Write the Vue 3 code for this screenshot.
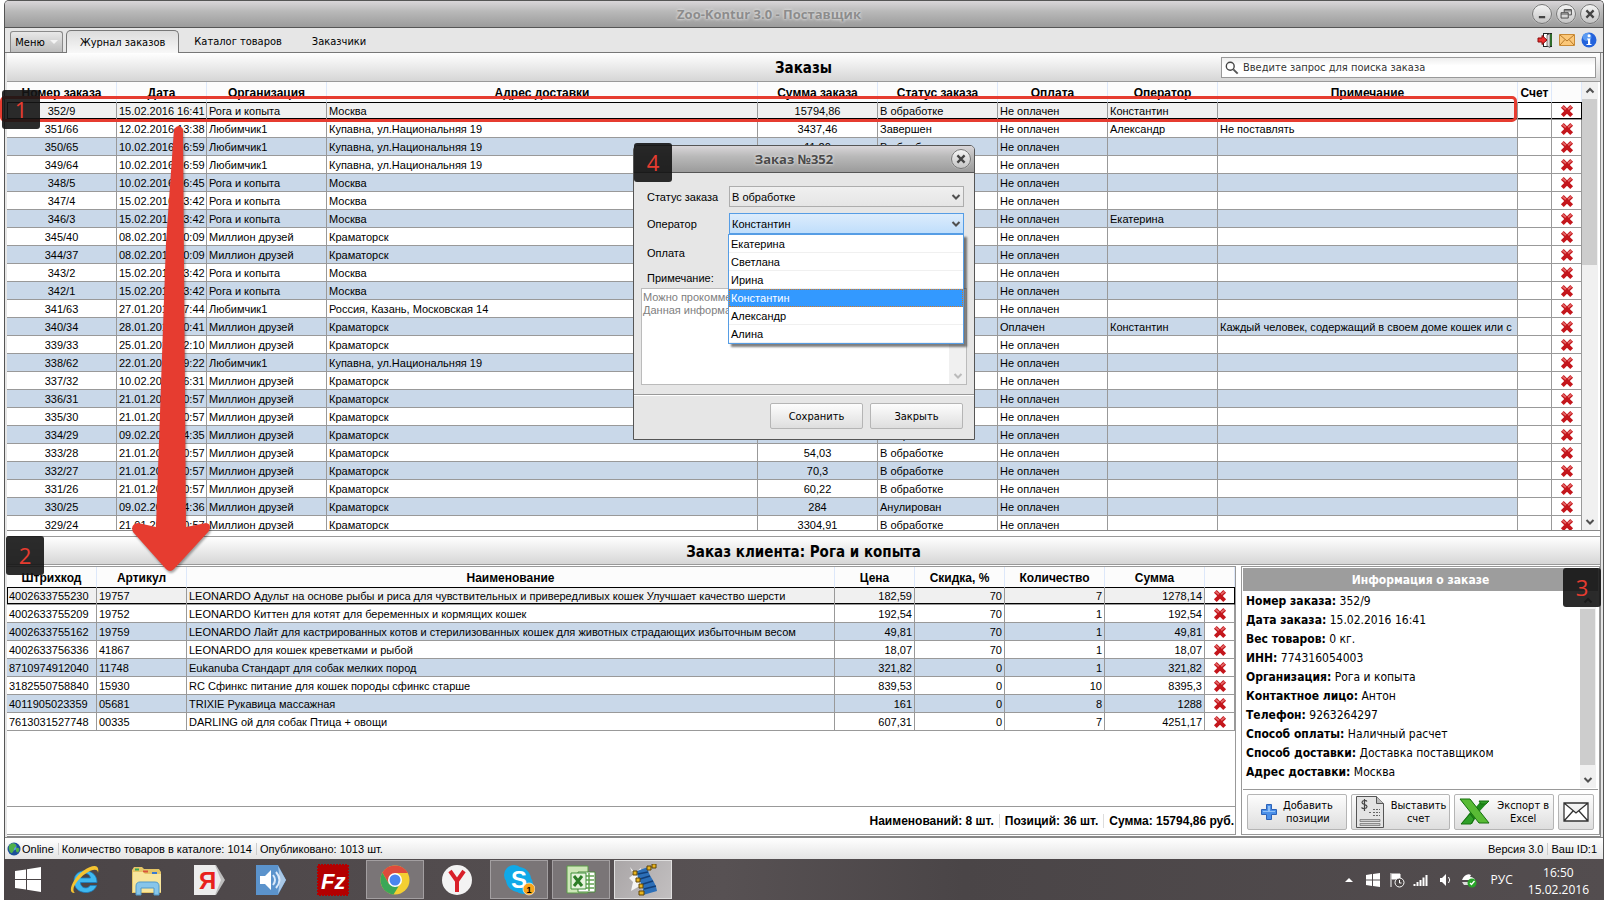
<template>
  <div class="pantalla">
    <div class="ventana">
      <header class="barra_titulo">
        <h1>Zoo-Kontur 3.0 - Поставщик</h1>
        <div class="botones_ventana">
          <button class="redondo" aria-label="Свернуть">
            <svg viewBox="0 0 20 20"><path d="M6.500 13.500h7" /></svg>
          </button>
          <button class="redondo" aria-label="Развернуть">
            <svg viewBox="0 0 20 20"><path class="fino" d="M8 8V5h8v6h-3M4.500 8.500h8v6h-8zM4.500 10h8M8 6.500h8" /></svg>
          </button>
          <button class="redondo" aria-label="Закрыть">
            <svg viewBox="0 0 20 20"><path d="M6 6l8 8M14 6l-8 8" /></svg>
          </button>
        </div>
      </header>

      <nav class="menu">
        <button class="boton_menu">Меню <span class="flecha"></span></button>
        <button
          v-for="(t, i) in tabs"
          :key="t"
          class="tab"
          :class="{ activo: i === tab }"
          @click="tab = i"
        >
          {{ t }}
        </button>
        <div class="iconos_menu">
          <svg viewBox="0 0 16 16">
            <path d="M6 1h9v14H6z" fill="#222" />
            <path d="M7 2h3v12H7z" fill="#fff" />
            <path d="M10 3l3-1.500v14L10 14z" fill="#d9d9d9" stroke="#333" stroke-width=".6" />
            <path d="M13 2h2v12h-2z" fill="#2f6b2b" />
            <path d="M1 6h4V3.500l5 4.500-5 4.500V10H1z" fill="#ee3030" stroke="#8a0d0d" />
          </svg>
          <svg viewBox="0 0 16 16">
            <path d="M.5 2.500h15v11H.5z" fill="#fbc778" stroke="#c98a35" />
            <path d="M1 3l7 6 7-6M1 13l5-5.500M15 13l-5-5.500" fill="none" stroke="#b87a2b" />
          </svg>
          <svg viewBox="0 0 16 16">
            <circle cx="8" cy="8" r="7.500" fill="#2463dc" />
            <ellipse cx="6" cy="5" rx="4.500" ry="4" fill="#5b9bf2" />
            <circle cx="8" cy="3.800" r="1.500" fill="#fff" />
            <path d="M6 6.500h3.200V12H10.500v1h-5v-1H7V7.500H6z" fill="#fff" />
          </svg>
        </div>
      </nav>

      <main class="contenido">
        <div class="franja">
          <h2>Заказы</h2>
          <label class="buscador">
            <svg viewBox="0 0 16 16">
              <circle cx="6" cy="6" r="4.500" fill="none" stroke="#444" stroke-width="1.600" />
              <path d="M9.500 9.500l5 5" stroke="#555" stroke-width="2.200" />
            </svg>
            <input v-model="busqueda" type="text" placeholder="Введите запрос для поиска заказа" />
          </label>
        </div>

        <div class="pedidos">
          <table class="tabla">
            <colgroup>
              <col v-for="(c, i) in columnas" :key="i" :style="c.w ? { width: c.w + 'px' } : {}" />
            </colgroup>
            <thead>
              <tr>
                <th v-for="(c, i) in columnas" :key="i">{{ c.t }}</th>
              </tr>
            </thead>
            <tbody>
              <tr v-for="(p, i) in pedidos" :key="i" :class="{ elegido: i === elegido }" @click="elegido = i">
                <td class="centro">{{ p[0] }}</td>
                <td>{{ p[1] }}</td>
                <td>{{ p[2] }}</td>
                <td>{{ p[3] }}</td>
                <td class="centro">{{ p[4] }}</td>
                <td>{{ p[5] }}</td>
                <td>{{ p[6] || 'Не оплачен' }}</td>
                <td>{{ p[7] }}</td>
                <td>{{ p[8] }}</td>
                <td class="blanco"></td>
                <td class="blanco borrar">
                  <button aria-label="Удалить">
                    <svg viewBox="0 0 12 12"><path d="M2 2l8 8M10 2l-8 8" /><path class="brillo" d="M2 2l3 2.500M10 2L7 4.500" /></svg>
                  </button>
                </td>
              </tr>
            </tbody>
          </table>
          <div class="scroll">
            <svg viewBox="0 0 16 16"><path d="M4.500 10L8 6.500l3.500 3.500" /></svg>
            <div class="carril"><div class="pulgar corto"></div></div>
            <svg viewBox="0 0 16 16"><path d="M4.500 6.500L8 10l3.500-3.500" /></svg>
          </div>
        </div>

        <div class="franja segunda">
          <h2>Заказ клиента: Рога и копыта</h2>
        </div>

        <div class="detalle">
          <section class="articulos">
            <table class="tabla">
              <colgroup>
                <col v-for="(c, i) in columnas2" :key="i" :style="c.w ? { width: c.w + 'px' } : {}" />
              </colgroup>
              <thead>
                <tr>
                  <th v-for="(c, i) in columnas2" :key="i">{{ c.t }}</th>
                </tr>
              </thead>
              <tbody>
                <tr v-for="(a, i) in articulos" :key="i" :class="{ elegido: i === 0 }">
                  <td v-for="(v, j) in a" :key="j" :class="{ derecha: j > 2 }">{{ v }}</td>
                  <td class="blanco borrar">
                    <button aria-label="Удалить">
                      <svg viewBox="0 0 12 12"><path d="M2 2l8 8M10 2l-8 8" /><path class="brillo" d="M2 2l3 2.500M10 2L7 4.500" /></svg>
                    </button>
                  </td>
                </tr>
              </tbody>
            </table>
            <div class="totales">
              <span>Наименований: 8 шт.</span>
              <span>Позиций: 36 шт.</span>
              <span>Сумма: 15794,86 руб.</span>
            </div>
          </section>

          <aside class="info">
            <h3>Информация о заказе</h3>
            <div class="cuerpo_info">
              <div class="lineas">
                <p v-for="l in info" :key="l[0]"><b>{{ l[0] }}:</b> {{ l[1] }}</p>
              </div>
              <div class="scroll">
                <svg viewBox="0 0 16 16"><path d="M4.500 10L8 6.500l3.500 3.500" /></svg>
                <div class="carril"><div class="pulgar largo"></div></div>
                <svg viewBox="0 0 16 16"><path d="M4.500 6.500L8 10l3.500-3.500" /></svg>
              </div>
            </div>
            <div class="acciones">
              <button>
                <svg class="mas" viewBox="0 0 16 16"><path d="M5.500.5h5v5h5v5h-5v5h-5v-5h-5v-5h5z" fill="#4a8fe8" stroke="#2c62b8" /><path d="M7 2h2v5h5v1H2V7h5z" fill="#8fc0f8" /></svg>
                <span>Добавить<br />позиции</span>
              </button>
              <button>
                <svg class="cuenta" viewBox="0 0 30 34">
                  <path d="M1.500 1.500h20l7 7v24h-27z" fill="#e4e4e4" stroke="#555" />
                  <path d="M21.500 1.500v7h7" fill="#bbb" stroke="#555" />
                  <path d="M12 6.500c-1-1.500-5-1.500-5 1s5 1.500 5 4-4 2.500-5.500 1M9.500 4v12" fill="none" stroke="#444" stroke-width="1.200" />
                  <path d="M14 17.500h3M18 14.500h7M18 17.500h7M18 20.500h7" stroke="#666" stroke-dasharray="2 1" />
                  <path d="M5 24.500h20v2H5zM5 28.500h20v2H5z" fill="#ccc" stroke="#777" stroke-width=".8" />
                </svg>
                <span>Выставить<br />счет</span>
              </button>
              <button>
                <svg class="excel" viewBox="0 0 32 28">
                  <path d="M1 1h10l6 8 5-6h8L20 14l-7 12H2l10-13z" fill="#1f8a1c" />
                  <path d="M1 1h10l19 24H20z" fill="#59bb35" stroke="#16700f" />
                  <path d="M20 3h10l-3 3-5 0zM2 26l9-10 4 5-3 5z" fill="#2f9f28" stroke="#16700f" />
                </svg>
                <span>Экспорт в<br />Excel</span>
              </button>
              <button class="carta" aria-label="Письмо">
                <svg viewBox="0 0 26 20"><path d="M1 1h24v18H1zM1 1l12 10L25 1M1 19l9-10M25 19l-9-10" fill="#fff" stroke="#333" stroke-width="1.300" /></svg>
              </button>
            </div>
          </aside>
        </div>
      </main>

      <footer class="estado">
        <svg class="globo" viewBox="0 0 14 14">
          <circle cx="7" cy="7" r="6.500" fill="#1d4f9a" />
          <circle cx="6" cy="5" r="3.500" fill="#5c9be0" />
          <path d="M2 4c2-4 6-3 7-1s-2 2-2 4-2 5-3 4-3-4-2-7zM9 6c3-1 4 1 3 3s-2 2-3 0z" fill="#4fb04a" />
        </svg>
        <span>Online</span>
        <span>Количество товаров в каталоге: 1014</span>
        <span>Опубликовано: 1013 шт.</span>
        <span class="version">Версия 3.0</span>
        <span>Ваш ID:1</span>
      </footer>
    </div>

    <div class="tareas">
      <button class="inicio" aria-label="Пуск">
        <svg viewBox="0 0 26 26"><path d="M0 4l11-1.500V12H0zM12 2.300L26 0v12H12zM0 13h11v9.500L0 21zM12 13h14v12l-14-2.300z" fill="#fff" /></svg>
      </button>
      <button class="tarea" aria-label="Internet Explorer">
        <svg viewBox="0 0 32 32">
          <path d="M28 18.500H11.500c0 6 7.500 7 9.500 3h6.500C24.500 32 5 31 5 17S28 3 28 18.500zm-6.500-4.500c-1-6-9-6-10 0z" fill="#3fb9f0" stroke="#1b7fc2" stroke-width=".8" />
          <path d="M6 29C-3 30 4 14 14 7S31 0 29 9c0-5-6-4-13 1S1 25 6 29z" fill="#f5c431" />
        </svg>
      </button>
      <button class="tarea" aria-label="Проводник">
        <svg viewBox="0 0 32 32">
          <path d="M1 6l2-3h8l2 2h15l2 3v21H1z" fill="#e5c566" />
          <path d="M4 5.500h4" stroke="#3aa655" stroke-width="2" />
          <path d="M12 7.500h5" stroke="#d9553b" stroke-width="2" />
          <path d="M21 9h5" stroke="#3a7ad0" stroke-width="2" />
          <path d="M2 8h10l2 2h16v18H2z" fill="#f8e59b" />
          <path d="M5 31V22c0-3 2-4 4-4h15c3 0 4 2 4 4v9h-5v-7H10v7z" fill="#86c5ea" stroke="#5199c9" />
        </svg>
      </button>
      <button class="tarea" aria-label="Яндекс">
        <svg viewBox="0 0 32 32">
          <path d="M1 1h22l9 15-9 15H1z" fill="#bdbdbd" />
          <path d="M1 1h21l6 15-6 15H1z" fill="#ececec" />
          <text x="6" y="25" class="letra rojo">Я</text>
        </svg>
      </button>
      <button class="tarea" aria-label="Звук">
        <svg viewBox="0 0 32 32">
          <path d="M1 1h22l8 15-8 15H1z" fill="#5b93cc" />
          <path d="M23 2l8 14-8 14 2-14z" fill="#a9c8e6" />
          <path d="M5 12h5l6-6v20l-6-6H5z" fill="#fff" />
          <path d="M18 11q4 5 0 10M21 8q7 8 0 16" fill="none" stroke="#dceafa" stroke-width="2" />
        </svg>
      </button>
      <button class="tarea" aria-label="FileZilla">
        <svg viewBox="0 0 32 32">
          <path d="M1 1h30v30H1z" fill="#b30000" stroke="#b30000" stroke-width="2" stroke-dasharray="2 1" />
          <text x="4" y="25" class="letra cursiva">Fz</text>
        </svg>
      </button>
      <button class="tarea abierta" aria-label="Chrome">
        <svg viewBox="0 0 32 32">
          <circle cx="16" cy="16" r="14.500" fill="#f4cf32" />
          <path d="M3.400 8.800A14.500 14.500 0 0 1 28.800 9H16l-6 11z" fill="#de4b3c" />
          <path d="M3.400 8.800L10 20l9.500 2.500-5 8A14.500 14.500 0 0 1 3.400 8.800z" fill="#3ba757" />
          <circle cx="16" cy="16" r="7" fill="#fff" />
          <circle cx="16" cy="16" r="5.500" fill="#4a86ee" />
        </svg>
      </button>
      <button class="tarea" aria-label="Яндекс Браузер">
        <svg viewBox="0 0 32 32">
          <circle cx="16" cy="16" r="15" fill="#f3f3f3" />
          <path d="M9 7l7 10 7-10M16 16v12" fill="none" stroke="#d9202a" stroke-width="4" />
        </svg>
      </button>
      <button class="tarea abierta" aria-label="Skype">
        <svg viewBox="0 0 32 32">
          <circle cx="11" cy="11" r="10" fill="#10a9e8" />
          <circle cx="20" cy="20" r="10" fill="#10a9e8" />
          <circle cx="15.500" cy="15.500" r="12.500" fill="#10a9e8" />
          <text x="8" y="24" class="letra">S</text>
          <circle cx="26" cy="25" r="6" fill="#f9a51a" stroke="#fff" stroke-width=".6" />
          <text x="23.500" y="29" class="aviso">1</text>
        </svg>
      </button>
      <button class="tarea abierta" aria-label="Excel">
        <svg viewBox="0 0 32 32">
          <path d="M2 2h21v27H2z" fill="#cde7b7" stroke="#5b9c48" />
          <path d="M13 8h17v20H13z" fill="#fff" stroke="#4a8b3b" />
          <path d="M20 12h9M20 16h9M20 20h9M20 24h9M24 9v18" stroke="#62a351" stroke-width="1.500" />
          <path d="M6 9h15v16H6z" fill="#e6f3dd" stroke="#3f8f38" />
          <path d="M9 12l8 10M17 12L9 22" stroke="#2c7d27" stroke-width="3" />
        </svg>
      </button>
      <button class="tarea abierta actual" aria-label="Zoo-Kontur">
        <svg viewBox="0 0 32 32">
          <path d="M3 3l5 6 6-5 3 22-6-3-7 4 2-9-4-4 4-3z" fill="#f4f4f4" />
          <path d="M10 7l11-4c-1 8 8 14 9 24l-14 4C18 20 9 16 10 7z" fill="#2c6fb8" />
          <path d="M11 10l10-2M13 15l10-3M16 20l10-3M17 25l12-3" stroke="#123f78" stroke-width="1.500" />
          <path d="M6 7h4v4H6zM9 14h4v4H9zM12 20h4v4h-4zM20 2h4v4h-4zM25 0h4v4h-4zM12 27h5v4h-5z" fill="#e8b520" stroke="#5c4306" />
        </svg>
      </button>

      <div class="bandeja">
        <svg viewBox="0 0 16 16"><path d="M4 10l4-4 4 4z" fill="#fff" /></svg>
        <svg viewBox="0 0 16 16"><path d="M1 3l6-1v5.500H1zM8 2l7-1v6.500H8zM1 8.500h6V14l-6-1zM8 8.500h7V15l-7-1z" fill="#fff" /></svg>
        <svg viewBox="0 0 16 16">
          <path d="M2 1v14M3 2h8v5H3z" fill="#fff" stroke="#fff" />
          <circle cx="10.500" cy="10.500" r="4.500" fill="#4c4747" stroke="#fff" /><path d="M10.500 8v3h2" fill="none" stroke="#fff" />
        </svg>
        <svg viewBox="0 0 16 16"><path d="M1.500 14v-2M4.500 14v-4M7.500 14V8M10.500 14V5.500M13.500 14V3" stroke="#fff" stroke-width="2" /></svg>
        <svg viewBox="0 0 16 16"><path d="M3 6h2l4-4v12l-4-4H3z" fill="#fff" /><path d="M11.500 5q2.500 3 0 6" fill="none" stroke="#fff" /></svg>
        <svg viewBox="0 0 16 16">
          <path d="M1 8c2-5 6-7 9-5l-1 2c3 0 5 2 5 3z" fill="#fff" />
          <path d="M1 10h8v3H3z" fill="#ddd" />
          <circle cx="11" cy="11" r="4.500" fill="#28a428" /><path d="M9 11l1.500 1.500L13.500 9" fill="none" stroke="#fff" stroke-width="1.300" />
        </svg>
        <span class="idioma">РУС</span>
        <time class="reloj">16:50<br />15.02.2016</time>
      </div>
    </div>

    <form class="dialogo" @submit.prevent>
      <div class="dialogo_titulo">
        <h2>Заказ №352</h2>
        <button type="button" class="redondo" aria-label="Закрыть окно">
          <svg viewBox="0 0 20 20"><path d="M6 6l8 8M14 6l-8 8" /></svg>
        </button>
      </div>
      <div class="campos">
        <label for="estado">Статус заказа</label>
        <div class="combo">
          <select id="estado" v-model="estado">
            <option>В обработке</option>
            <option>Завершен</option>
            <option>Анулирован</option>
          </select>
          <svg viewBox="0 0 10 8"><path d="M1.500 2L5 5.500 8.500 2" /></svg>
        </div>
        <label for="operador">Оператор</label>
        <div class="combo abierto">
          <select id="operador" v-model="operador">
            <option v-for="o in operadores" :key="o">{{ o }}</option>
          </select>
          <svg viewBox="0 0 10 8"><path d="M1.500 2L5 5.500 8.500 2" /></svg>
          <ul class="lista">
            <li v-for="o in operadores" :key="o" :class="{ marcado: o === operador }" @click="operador = o">
              {{ o }}
            </li>
          </ul>
        </div>
        <span class="rotulo">Оплата</span>
      </div>
      <div class="nota">
        <label for="nota">Примечание:</label>
        <div class="caja">
          <textarea id="nota" v-model="nota" placeholder="Можно прокомментировать&#10;Данная информация"></textarea>
          <div class="riel"><svg viewBox="0 0 10 8"><path d="M1.500 2L5 5.500 8.500 2" /></svg></div>
        </div>
      </div>
      <div class="pie">
        <button type="submit">Сохранить</button>
        <button type="button">Закрыть</button>
      </div>
    </form>

    <!-- подсказки поверх окна -->
    <div class="marco"></div>
    <svg class="flecha_roja" viewBox="0 0 84 452">
      <path d="M45 6Q50 0 54 6L57 404 77 400Q83 401 80 408L45 446Q41 450 37 446L4 409Q1 401 9 400L27 404 37 120z" />
    </svg>
    <div class="numero uno">1</div>
    <div class="numero dos">2</div>
    <div class="numero tres">3</div>
    <div class="numero cuatro">4</div>
  </div>
</template>

<script setup>
import { ref } from "vue";

const tabs = ["Журнал заказов", "Каталог товаров", "Заказчики"];
const tab = ref(0);
const busqueda = ref("");
const elegido = ref(0);
const estado = ref("В обработке");
const operador = ref("Константин");
const operadores = ["Екатерина", "Светлана", "Ирина", "Константин", "Александр", "Алина"];
const nota = ref("");

const columnas = [
  { t: "Номер заказа", w: 110 },
  { t: "Дата", w: 90 },
  { t: "Организация", w: 120 },
  { t: "Адрес доставки" },
  { t: "Сумма заказа", w: 120 },
  { t: "Статус заказа", w: 120 },
  { t: "Оплата", w: 110 },
  { t: "Оператор", w: 110 },
  { t: "Примечание", w: 300 },
  { t: "Счет", w: 34 },
  { t: "", w: 30 },
];

const R = "Рога и копыта";
const L = "Любимчик1";
const M = "Миллион друзей";
const K = "Краматорск";
const KU = "Купавна, ул.Национальняя 19";
const O = "В обработке";

// номер, дата, организация, адрес, сумма, статус, оплата, оператор, примечание
const pedidos = [
  ["352/9", "15.02.2016 16:41", R, "Москва", "15794,86", O, "", "Константин"],
  ["351/66", "12.02.2016 13:38", L, KU, "3437,46", "Завершен", "", "Александр", "Не поставлять"],
  ["350/65", "10.02.2016 16:59", L, KU, "11,20", O],
  ["349/64", "10.02.2016 16:59", L, KU],
  ["348/5", "10.02.2016 16:45", R, "Москва"],
  ["347/4", "15.02.2016 13:42", R, "Москва"],
  ["346/3", "15.02.2016 13:42", R, "Москва", "", "", "", "Екатерина"],
  ["345/40", "08.02.2016 10:09", M, K],
  ["344/37", "08.02.2016 10:09", M, K],
  ["343/2", "15.02.2016 13:42", R, "Москва"],
  ["342/1", "15.02.2016 13:42", R, "Москва"],
  ["341/63", "27.01.2016 17:44", L, "Россия, Казань, Московская 14"],
  ["340/34", "28.01.2016 10:41", M, K, "", "", "Оплачен", "Константин", "Каждый человек, содержащий в своем доме кошек или с"],
  ["339/33", "25.01.2016 12:10", M, K],
  ["338/62", "22.01.2016 19:22", L, KU],
  ["337/32", "10.02.2016 16:31", M, K],
  ["336/31", "21.01.2016 10:57", M, K],
  ["335/30", "21.01.2016 10:57", M, K],
  ["334/29", "09.02.2016 14:35", M, K, "", O],
  ["333/28", "21.01.2016 10:57", M, K, "54,03", O],
  ["332/27", "21.01.2016 10:57", M, K, "70,3", O],
  ["331/26", "21.01.2016 10:57", M, K, "60,22", O],
  ["330/25", "09.02.2016 14:36", M, K, "284", "Анулирован"],
  ["329/24", "21.01.2016 10:57", M, K, "3304,91", O],
];

const columnas2 = [
  { t: "Штрихкод", w: 90 },
  { t: "Артикул", w: 90 },
  { t: "Наименование" },
  { t: "Цена", w: 80 },
  { t: "Скидка, %", w: 90 },
  { t: "Количество", w: 100 },
  { t: "Сумма", w: 100 },
  { t: "", w: 30 },
];

const articulos = [
  ["4002633755230", "19757", "LEONARDO Адульт на основе рыбы и риса для чувствительных и привередливых кошек Улучшает качество шерсти", "182,59", 70, 7, "1278,14"],
  ["4002633755209", "19752", "LEONARDO Киттен для котят для беременных и кормящих кошек", "192,54", 70, 1, "192,54"],
  ["4002633755162", "19759", "LEONARDO Лайт для кастрированных котов и стерилизованных кошек для животных страдающих избыточным весом", "49,81", 70, 1, "49,81"],
  ["4002633756336", "41867", "LEONARDO для кошек креветками и рыбой", "18,07", 70, 1, "18,07"],
  ["8710974912040", "11748", "Eukanuba Стандарт для собак мелких пород", "321,82", 0, 1, "321,82"],
  ["3182550758840", "15930", "RC Сфинкс питание для кошек породы сфинкс старше", "839,53", 0, 10, "8395,3"],
  ["4011905023359", "05681", "TRIXIE Рукавица массажная", "161", 0, 8, "1288"],
  ["7613031527748", "00335", "DARLING ой для собак Птица + овощи", "607,31", 0, 7, "4251,17"],
];

const info = [
  ["Номер заказа", "352/9"],
  ["Дата заказа", "15.02.2016 16:41"],
  ["Вес товаров", "0 кг."],
  ["ИНН", "774316054003"],
  ["Организация", "Рога и копыта"],
  ["Контактное лицо", "Антон"],
  ["Телефон", "9263264297"],
  ["Способ оплаты", "Наличный расчет"],
  ["Способ доставки", "Доставка поставщиком"],
  ["Адрес доставки", "Москва"],
];
</script>

<style>
body {
  background-color: white;
}
</style>

<style scoped>
* {
  margin: 0;
  padding: 0;
  box-sizing: border-box;
}

button,
input,
select,
textarea {
  font: inherit;
  color: inherit;
  border: 0;
  background: none;
  outline: none;
}

.pantalla {
  position: relative;
  height: 100vh;
  padding-left: 4px;
  display: flex;
  flex-direction: column;
  overflow: hidden;
  font-family: "DejaVu Sans Condensed", "DejaVu Sans", sans-serif;
  font-size: 11px;
  color: #000;
}

.ventana {
  flex: 1;
  min-height: 0;
  display: flex;
  flex-direction: column;
  border: 1px solid #555;
  border-bottom: 0;
  border-radius: 5px 5px 0 0;
  background-color: #e6e6e6;
}

.barra_titulo {
  position: relative;
  height: 27px;
  flex: none;
  display: flex;
  align-items: center;
  justify-content: center;
  padding-right: 70px;
  border-bottom: 1px solid #555;
  border-radius: 4px 4px 0 0;
  background: linear-gradient(#d9d6d9, #b9b9b9 40%, #9b9b9b);
}

.barra_titulo h1 {
  font: bold 13px "Open Sans", "Noto Sans", sans-serif;
  color: #8c8c8c;
  text-shadow: 0 0 3px #ddd, 0 0 3px #ddd;
}

.botones_ventana {
  position: absolute;
  right: 3px;
  top: 3px;
  display: flex;
  gap: 4px;
}

.redondo {
  width: 20px;
  height: 20px;
  border: 1px solid #777;
  border-radius: 50%;
  background: linear-gradient(#f4f4f4, #c4c4c4);
  box-shadow: 0 0 1px #fff;
}

.redondo svg {
  display: block;
  width: 18px;
  height: 18px;
}

.redondo path {
  fill: none;
  stroke: #444;
  stroke-width: 2.5;
}

.redondo .fino {
  stroke-width: 1;
}

.menu {
  height: 25px;
  flex: none;
  display: flex;
  align-items: flex-end;
  padding: 0 6px 0 5px;
  border-bottom: 1px solid #777;
}

.boton_menu {
  width: 53px;
  height: 21px;
  display: flex;
  align-items: center;
  justify-content: center;
  gap: 5px;
  margin-right: 3px;
  border: 1px solid #8a8a8a;
  border-bottom: 0;
  border-radius: 3px 3px 0 0;
  background: linear-gradient(#e8e8e8, #bdbdbd);
}

.flecha {
  border: 4px solid transparent;
  border-top-color: #f4f4f4;
  border-bottom: 0;
}

.tab {
  height: 23px;
  padding: 0 14px;
  border: 1px solid transparent;
  border-bottom: 0;
}

.tab.activo {
  margin-bottom: -1px;
  padding: 0 13px;
  border-color: #777;
  border-radius: 5px 5px 0 0;
  background: linear-gradient(#dcdcdc, #f8f8f8);
}

.iconos_menu {
  display: flex;
  gap: 6px;
  margin-left: auto;
  height: 24px;
  align-items: center;
}

.iconos_menu svg {
  width: 16px;
  height: 16px;
}

.contenido {
  flex: 1;
  min-height: 0;
  display: flex;
  flex-direction: column;
  margin: 0 2px;
  border-right: 1px solid #888;
  border-bottom: 1px solid #888;
  background-color: #fff;
}

.franja {
  position: relative;
  height: 29px;
  flex: none;
  display: flex;
  align-items: center;
  justify-content: center;
  padding-top: 2px;
  border-bottom: 1px solid #999;
  background: linear-gradient(#fff, #d6d6d6);
}

.franja h2 {
  font-size: 15px;
}

.segunda {
  margin-top: 5px;
  border-top: 1px solid #999;
}

.buscador {
  position: absolute;
  right: 4px;
  top: 4px;
  width: 375px;
  height: 21px;
  display: flex;
  align-items: center;
  border: 1px solid #999;
  background: linear-gradient(#eee, #fff 40%);
}

.buscador svg {
  width: 14px;
  height: 14px;
  margin: 0 4px 0 3px;
}

.buscador input {
  flex: 1;
}

.buscador input::placeholder {
  color: #333;
  opacity: 1;
}

.pedidos {
  flex: 1;
  min-height: 0;
  display: flex;
  overflow: hidden;
  padding-right: 2px;
  border-bottom: 1px solid #888;
}

.tabla {
  flex: 1;
  width: 100%;
  table-layout: fixed;
  border-spacing: 0;
  font-family: "Liberation Sans", Arial, sans-serif;
  font-size: 11px;
  line-height: 16px;
  white-space: nowrap;
}

.pedidos .tabla {
  align-self: flex-start;
}

.tabla th {
  height: 20px;
  padding-top: 2px;
  border-right: 1px solid #dde8fa;
  background-color: #fcfcfc;
  font-size: 12px;
  vertical-align: middle;
}

.tabla td {
  height: 18px;
  padding: 1px 2px 0;
  border-right: 1px solid #999;
  border-bottom: 1px solid #999;
  overflow: hidden;
}

.tabla tbody tr:nth-child(odd) td {
  background-color: #c9d8e9;
}

.tabla tbody tr:nth-child(even) td,
.tabla tbody tr td.blanco {
  background-color: #fff;
}

.tabla tbody tr.elegido td:not(.blanco) {
  background-color: #f0f0f0;
}

.tabla .elegido td {
  box-shadow: inset 0 1px #000, inset 0 -1px #000;
}

.tabla .elegido td:first-child {
  box-shadow: inset 0 1px #000, inset 0 -1px #000, inset 1px 0 #000;
}

.tabla .elegido td:last-child {
  box-shadow: inset 0 1px #000, inset 0 -1px #000;
  border-right-color: #000;
}

.tabla .centro {
  text-align: center;
}

.tabla .derecha {
  text-align: right;
}

.tabla .borrar {
  padding: 0;
  text-align: center;
  line-height: 0;
}

.borrar svg {
  display: block;
  width: 14px;
  height: 14px;
}

.borrar path {
  fill: none;
  stroke: #c4161c;
  stroke-width: 3.4;
}

.borrar .brillo {
  stroke: #e46a6a;
  stroke-width: 1.5;
}

.scroll {
  width: 16px;
  flex: none;
  display: flex;
  flex-direction: column;
  background-color: #f0f0f0;
}

.scroll > svg {
  width: 16px;
  height: 17px;
  flex: none;
}

.scroll path,
.combo path,
.riel path {
  fill: none;
  stroke: #505050;
  stroke-width: 2;
}

.carril {
  flex: 1;
}

.pulgar {
  width: 15px;
  background-color: #cdcdcd;
}

.corto {
  height: 40%;
}

.largo {
  height: 96%;
}

.detalle {
  height: 271px;
  flex: none;
  display: flex;
  gap: 5px;
  padding: 1px 0;
}

.articulos {
  flex: 1;
  min-width: 0;
  display: flex;
  flex-direction: column;
  border: 1px solid #999;
  border-left: 0;
}

.articulos .tabla {
  flex: none;
}

.totales {
  margin-top: auto;
  height: 28px;
  display: flex;
  align-items: center;
  justify-content: flex-end;
  padding-top: 1px;
  border-top: 1px solid #999;
  font-family: "Liberation Sans", Arial, sans-serif;
  font-size: 12px;
  font-weight: bold;
}

.totales span {
  padding: 0 1px 0 5px;
}

.totales span + span {
  margin-left: 4px;
  border-left: 1px solid #ddd;
}

.info {
  width: 359px;
  flex: none;
  display: flex;
  flex-direction: column;
  padding: 1px;
  border: 1px solid #999;
}

.info h3 {
  height: 23px;
  flex: none;
  font-size: 12px;
  line-height: 24px;
  text-align: center;
  color: #fff;
  background-color: #9d9d9d;
}

.cuerpo_info {
  flex: 1;
  min-height: 0;
  display: flex;
  padding: 1px 2px 1px 3px;
}

.lineas {
  flex: 1;
  font-size: 12px;
  line-height: 19px;
}

.acciones {
  display: flex;
  gap: 4px;
  padding: 4px 4px 3px;
  border-top: 1px solid #999;
}

.acciones button {
  flex: 1;
  height: 36px;
  display: flex;
  align-items: center;
  justify-content: center;
  gap: 6px;
  border: 1px solid #b5b5b5;
  border-radius: 2px;
  background: linear-gradient(#fdfdfd, #dedede);
  line-height: 13px;
}

.acciones .carta {
  flex: none;
  width: 36px;
}

.mas {
  width: 16px;
  height: 16px;
}

.cuenta {
  width: 30px;
  height: 34px;
}

.excel {
  width: 32px;
  height: 28px;
}

.carta svg {
  width: 26px;
  height: 20px;
}

.estado {
  height: 22px;
  flex: none;
  display: flex;
  align-items: center;
  padding: 0 2px 0 2px;
  border-top: 1px solid #888;
  background: linear-gradient(#fff, #e4e4e4);
  font-family: "Liberation Sans", Arial, sans-serif;
}

.globo {
  width: 14px;
  height: 14px;
  margin-right: 1px;
}

.estado span {
  padding-right: 4px;
}

.estado span + span {
  padding-left: 3px;
  border-left: 1px solid #ccc;
}

.estado .version {
  margin-left: auto;
  border: 0;
}

.tareas {
  height: 41px;
  flex: none;
  display: flex;
  gap: 4px;
  padding: 1px 0;
  background: linear-gradient(90deg, #4a4446, #575153 45%, #4a4547 60%, #534d4f);
}

.inicio {
  width: 48px;
  display: flex;
  align-items: center;
  justify-content: center;
}

.inicio svg {
  width: 26px;
  height: 26px;
}

.tarea {
  width: 58px;
  display: flex;
  align-items: center;
  justify-content: center;
}

.tarea svg {
  width: 32px;
  height: 32px;
}

.tarea.abierta {
  border: 1px solid #a39fa1;
  background-color: #7a7577;
}

.tarea.actual {
  border-color: #e0dfdf;
  background: linear-gradient(120deg, #aaa6a7, #c2bfc0);
}

.letra {
  font: bold 24px "Liberation Sans", Arial, sans-serif;
  fill: #fff;
}

.rojo {
  fill: #e8211c;
}

.cursiva {
  font-style: italic;
  font-size: 22px;
}

.aviso {
  font: bold 9px "Liberation Sans", Arial, sans-serif;
  fill: #000;
}

.bandeja {
  margin-left: auto;
  display: flex;
  align-items: center;
  gap: 8px;
  padding-right: 15px;
  font-family: "Open Sans", "Noto Sans", sans-serif;
  font-size: 12px;
  color: #fff;
}

.bandeja svg {
  width: 16px;
  height: 16px;
}

.idioma {
  margin: 0 7px 0 6px;
}

.reloj {
  line-height: 17px;
  padding-top: 2px;
  text-align: center;
}

.dialogo {
  position: absolute;
  left: calc(50% - 169px);
  top: 145px;
  width: 342px;
  border: 1px solid #555;
  border-radius: 5px 5px 0 0;
  background-color: #e6e6e6;
  font-family: "Liberation Sans", Arial, sans-serif;
}

.dialogo_titulo {
  height: 27px;
  display: flex;
  align-items: center;
  justify-content: flex-end;
  padding: 0 3px;
  border-bottom: 1px solid #555;
  border-radius: 4px 4px 0 0;
  background: linear-gradient(#d9d6d9, #b9b9b9 40%, #9b9b9b);
}

.dialogo_titulo h2 {
  flex: 1;
  text-align: center;
  font: bold 13px "Open Sans", "Noto Sans", sans-serif;
  color: #4a4a4a;
  text-shadow: 0 0 3px #ddd, 0 0 3px #ddd;
}

.campos {
  display: grid;
  grid-template-columns: 82px 235px;
  grid-auto-rows: 21px;
  row-gap: 6px;
  align-items: center;
  padding: 13px 10px 0 13px;
}

.campos label {
  padding-top: 1px;
}

.rotulo {
  padding-top: 4px;
}

.combo {
  position: relative;
  height: 21px;
}

.combo select {
  width: 100%;
  height: 100%;
  padding-left: 2px;
  appearance: none;
  border: 1px solid #adadad;
  background: linear-gradient(#f0f0f0, #e5e5e5);
}

.combo > svg {
  position: absolute;
  right: 3px;
  top: 7px;
  width: 10px;
  height: 8px;
}

.combo.abierto select {
  border-color: #569de5;
  background: linear-gradient(#dcecfc, #c0defb);
}

.lista {
  position: absolute;
  left: -1px;
  right: 0;
  top: 21px;
  z-index: 1;
  border: 1px solid #569de5;
  background-color: #fff;
  box-shadow: 3px 3px 2px rgba(0, 0, 0, 0.5);
  list-style: none;
}

.lista li {
  height: 18px;
  padding-left: 2px;
  line-height: 18px;
  border-bottom: 1px solid #f0f0f0;
}

.lista .marcado {
  border: 1px dotted #d77a22;
  padding-left: 1px;
  line-height: 16px;
  background-color: #3399ff;
  color: #fff;
}

.nota {
  padding: 10px 7px 0;
}

.nota label {
  display: block;
  padding-left: 6px;
  height: 17px;
  line-height: 15px;
}

.caja {
  height: 97px;
  display: flex;
  border: 1px solid #bbb;
  background-color: #fff;
}

.caja textarea {
  flex: 1;
  resize: none;
  padding: 2px 1px;
  overflow: hidden;
  line-height: 13px;
}

.caja textarea::placeholder {
  color: #808080;
  opacity: 1;
}

.riel {
  width: 17px;
  display: flex;
  align-items: flex-end;
  justify-content: center;
  padding-bottom: 4px;
  background-color: #f0f0f0;
}

.riel svg {
  width: 10px;
  height: 8px;
}

.riel path {
  stroke: #bbb;
}

.pie {
  display: flex;
  justify-content: flex-end;
  gap: 7px;
  margin-top: 9px;
  padding: 8px 11px 10px;
  border-top: 1px solid #999;
  box-shadow: inset 0 1px #fff;
}

.pie button {
  width: 93px;
  height: 26px;
  border: 1px solid #b5b5b5;
  border-radius: 2px;
  background: linear-gradient(#fdfdfd, #dedede);
  font-family: "DejaVu Sans Condensed", "DejaVu Sans", sans-serif;
}

.marco {
  position: absolute;
  left: 0;
  right: 87px;
  top: 96px;
  height: 26px;
  border: 3px solid #e63c30;
  border-radius: 5px;
}

.flecha_roja {
  position: absolute;
  left: 129px;
  top: 123px;
  width: 84px;
  height: 452px;
  filter: drop-shadow(1px 2px 1px rgba(0, 0, 0, 0.35));
}

.flecha_roja path {
  fill: #e63c30;
}

.numero {
  position: absolute;
  width: 38px;
  height: 39px;
  border-radius: 3px;
  background-color: rgba(20, 20, 20, 0.9);
  font-family: "Open Sans", "Noto Sans", sans-serif;
  font-size: 22px;
  line-height: 39px;
  text-align: center;
  color: #e63c30;
}

.uno {
  left: 2px;
  top: 90px;
}

.dos {
  left: 6px;
  top: 536px;
}

.tres {
  right: 3px;
  top: 568px;
}

.cuatro {
  left: calc(50% - 168px);
  top: 143px;
}
</style>
